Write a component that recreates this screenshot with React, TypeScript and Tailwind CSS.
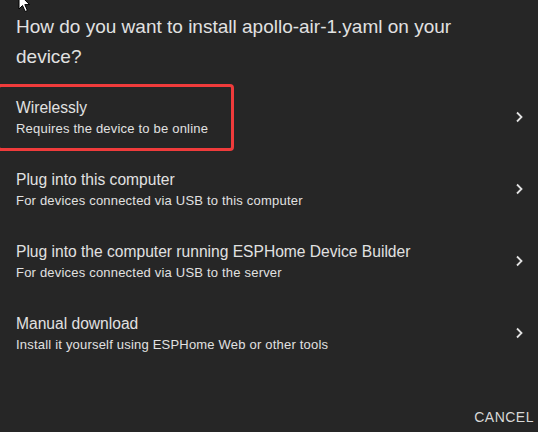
import React from 'react';

interface InstallOption {
  title: string;
  description: string;
}

const options: InstallOption[] = [
  { title: 'Wirelessly', description: 'Requires the device to be online' },
  { title: 'Plug into this computer', description: 'For devices connected via USB to this computer' },
  { title: 'Plug into the computer running ESPHome Device Builder', description: 'For devices connected via USB to the server' },
  { title: 'Manual download', description: 'Install it yourself using ESPHome Web or other tools' },
];

function Chevron() {
  return (
    <svg width="10" height="12" viewBox="0 0 10 12" className="shrink-0">
      <polyline points="3,1.5 7.5,6 3,10.5" fill="none" stroke="#e2e2e2" strokeWidth="1.8" />
    </svg>
  );
}

// mouse pointer left over the dialog, tip clipped by the top edge
function Cursor() {
  return (
    <svg width="13" height="20" viewBox="0 0 13 20" className="absolute left-[18px] -top-[7px]">
      <path d="M1 1 L1 16 L4.5 12.5 L7.2 18.5 L9.4 17.5 L6.8 11.6 L11.5 11.6 Z" fill="#fff" stroke="#000" strokeWidth="1" strokeLinejoin="miter" />
    </svg>
  );
}

function OptionRow({ title, description }: InstallOption) {
  return (
    <div className="h-[72px] flex items-center pl-4 pr-[14px] cursor-pointer">
      <div className="flex-1 min-w-0 pt-[3px]">
        <div className="text-[15.6px] leading-[20px] text-[#e1e1e1]">{title}</div>
        <div className="text-[13px] leading-[20px] text-[#e1e1e1] tracking-[0.2px] mt-[1px]">{description}</div>
      </div>
      <Chevron />
    </div>
  );
}

export default function App() {
  return (
    <div className="relative w-[538px] h-[432px] bg-[#262626] overflow-hidden font-['Liberation_Sans',Arial,sans-serif]">
      <Cursor />
      <h2 className="w-[480px] px-4 pt-[12px] text-[19px] leading-[30px] text-[#e1e1e1] font-normal">
        How do you want to install apollo-air-1.yaml on your device?
      </h2>

      <div className="mt-[9px] relative">
        <div className="absolute -left-[3px] top-[3px] w-[237px] h-[67px] border-[3px] border-[#ef3b3b] rounded-[4px] pointer-events-none" />
        {options.map(o => (
          <OptionRow key={o.title} title={o.title} description={o.description} />
        ))}
      </div>

      <div className="flex justify-end pr-[4px] pt-[38px]">
        <button className="text-[14px] leading-[20px] tracking-[0.5px] text-[#d8d8d8] uppercase">Cancel</button>
      </div>
    </div>
  );
}
